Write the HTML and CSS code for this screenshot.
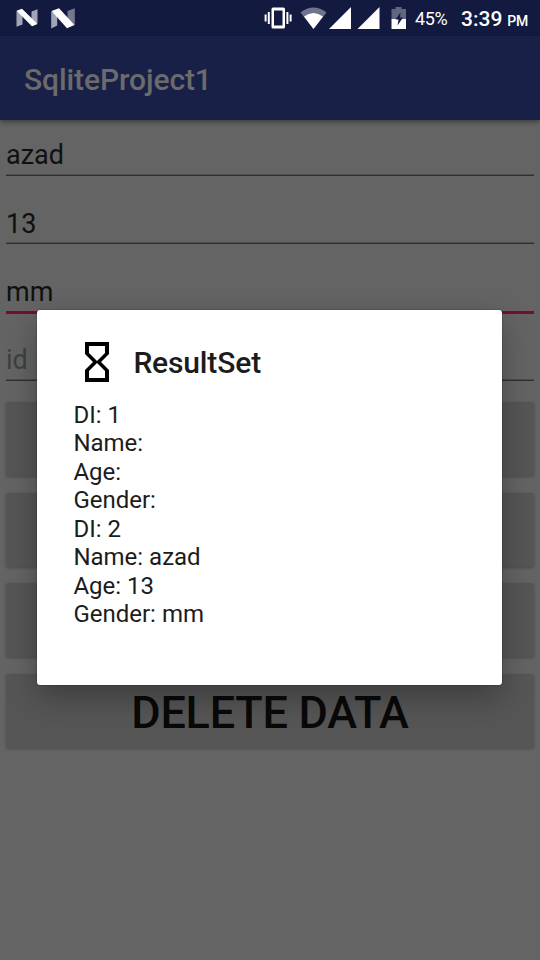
FILE: index.html
```html
<!DOCTYPE html>
<html lang="en">
<head>
<meta charset="utf-8">
<title>SqliteProject1</title>
<link rel="stylesheet" href="styles.css">
</head>
<body>
<header class="status">
  <svg class="notifications" width="90" height="36" viewBox="0 0 90 36">
    <path fill="#a3a5b7" d="M16.500 11l6 3v10.500l-6 2.200zM31.500 11.500l6-2.200V23l-6 3z"/>
    <path fill="#fff" d="M16.500 10.800l5.500-2L37.500 24l-5.500 2.300z"/>
    <path fill="#a3a5b7" d="M51.200 11.500l6 3v11l-6 3z"/>
    <path fill="#75778f" d="M67.500 11l7.300-2.700V25l-7.300-3z"/>
    <path fill="#fff" d="M51.500 11l7.500-2.700L74.500 25l-7.500 3.300z"/>
  </svg>
  <svg class="signals" width="150" height="36" viewBox="260 0 150 36">
    <path fill="#fff" fill-rule="evenodd" d="M273 7.500h10.500a1.500 1.500 0 0 1 1.500 1.500v18a1.500 1.500 0 0 1-1.500 1.500H273a1.500 1.500 0 0 1-1.500-1.500V9a1.500 1.500 0 0 1 1.500-1.500zM274 10.500v15h8.500v-15z"/>
    <path fill="#fff" d="M267.800 12h2v12h-2zM264.600 14.500h2v7h-2zM286.400 12h2v12h-2zM289.600 14.500h2v7h-2z"/>
    <path fill="#70738d" d="M300.500 12.500Q313.500 2.500 326.500 12.500L313.500 29z"/>
    <path fill="#fff" d="M304 16.500Q313.500 9.500 323 16.500L313.500 29z"/>
    <path fill="#fff" d="M351 7v22h-22zM379.500 7v22h-22z"/>
    <path fill="#62657f" d="M391.500 9h4V7h6v2h4.500v10h-14.500z"/>
    <path fill="#fff" d="M391.500 19H406v10h-14.500z"/>
    <path fill="#131a40" d="M400.500 12.500l-5 7h3l-1 6 5.500-8h-3z"/>
  </svg>
  <span class="battery">45%</span>
  <span class="clock">3:39<small>PM</small></span>
</header>
<div class="appbar">SqliteProject1</div>
<main class="form">
  <div class="field">azad</div>
  <div class="field">13</div>
  <div class="field focused">mm</div>
  <div class="field hint">id</div>
  <div class="buttons">
    <div class="button"></div>
    <div class="button"></div>
    <div class="button"></div>
    <div class="button">DELETE DATA</div>
  </div>
</main>
<section class="dialog" role="dialog">
  <div class="heading">
    <svg width="48" height="48" viewBox="0 0 24 24"><path d="M6 2v6h.01L6 8.010 10 12l-4 4 .01.01H6V22h12v-5.990h-.01L18 16l-4-4 4-3.990-.01-.01H18V2H6zm10 14.500V20H8v-3.500l4-4 4 4zm-4-5l-4-4V4h8v3.500l-4 4z"/></svg>
    <h1>ResultSet</h1>
  </div>
  <div class="message">
    <div>DI: 1</div>
    <div>Name:</div>
    <div>Age:</div>
    <div>Gender:</div>
    <div>DI: 2</div>
    <div>Name: azad</div>
    <div>Age: 13</div>
    <div>Gender: mm</div>
  </div>
</section>
</body>
</html>
```
FILE: styles.css
```css
* { box-sizing: border-box; }
body {
  margin: 0;
  height: 960px;
  overflow: hidden;
  background: #646464;
  font-family: Roboto, sans-serif;
  color: #101010;
}
.status {
  display: flex;
  height: 36px;
  background: #131a40;
  color: #fff;
}
.signals { margin-left: 170px; }
.battery {
  width: 46px;
  padding-left: 5px;
  font-size: 18px;
  letter-spacing: -.4px;
  line-height: 38px;
}
.clock {
  padding-left: 5px;
  font-size: 21px;
  font-weight: 500;
  line-height: 38px;
  white-space: nowrap;
}
.clock small {
  margin-left: 5px;
  font-size: 14px;
  letter-spacing: -.3px;
}
.appbar {
  position: relative;
  height: 84px;
  padding-left: 24px;
  background: #182048;
  box-shadow: 0 2px 5px rgba(0, 0, 0, .4);
  color: #6b6b6b;
  font-size: 30px;
  font-weight: 500;
  letter-spacing: -.1px;
  line-height: 88px;
}
.form { padding: 0 6px; }
.field {
  height: 68px;
  padding-top: 32px;
  border-bottom: 1px solid #303030;
  box-shadow: inset 0 -1px #4c4c4c;
  font-size: 27px;
  line-height: 32px;
}
.field:first-child {
  height: 56px;
  padding-top: 19px;
}
.focused { height: 70px; border-bottom: 3px solid #720f34; box-shadow: none; }
.hint { height: 67px; padding-top: 30px; color: #404040; }
.buttons {
  display: grid;
  gap: 16.700px;
  padding-top: 21px;
}
.button {
  height: 74px;
  border-radius: 3px;
  background: #565656;
  box-shadow: 0 1px 3px rgba(0, 0, 0, .25);
  color: #090909;
  font-size: 45px;
  font-weight: 500;
  letter-spacing: -.25px;
  line-height: 77px;
  text-align: center;
}
.dialog {
  position: absolute;
  left: 37.400px;
  top: 310.400px;
  width: 464.400px;
  height: 375px;
  padding: 26.500px 36px;
  border-radius: 3px;
  background: #fff;
  box-shadow: 0 12px 32px rgba(0, 0, 0, .3), 0 0 2px rgba(0, 0, 0, .4);
  color: #1c1c1c;
}
.heading {
  display: flex;
  gap: 12px;
  align-items: center;
  height: 48px;
}
.heading svg { margin: 1px 0 -1px; }
.heading h1 {
  margin: 4px 0 0;
  font-size: 30px;
  font-weight: 500;
  letter-spacing: -.15px;
  line-height: 36px;
}
.message {
  padding-top: 16px;
  font-size: 24px;
  line-height: 28.500px;
}
```
